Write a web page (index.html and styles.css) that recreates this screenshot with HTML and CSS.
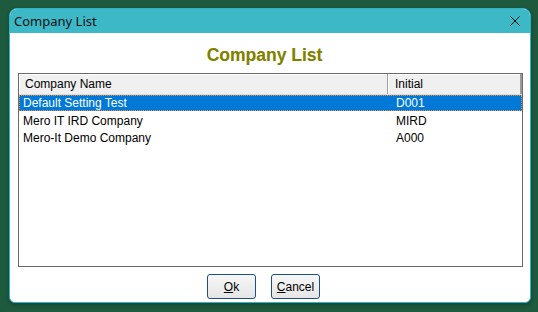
FILE: index.html
```html
<!DOCTYPE html>
<html>
<head>
<meta charset="utf-8">
<link rel="stylesheet" href="styles.css">
</head>
<body>
<div class="window">
  <div class="titlebar">
    <span class="title">Company List</span>
    <svg class="close" width="10" height="10" viewBox="0 0 10 10"><path d="M0.5 0.5 L9.5 9.5 M9.5 0.5 L0.5 9.5" stroke="#111" stroke-width="1" fill="none"/></svg>
  </div>
  <div class="content">
    <div class="heading">Company List</div>
    <div class="list">
      <div class="header">
        <div class="hcell c1">Company Name</div>
        <div class="hcell c2">Initial</div>
      </div>
      <div class="row selected"><div class="cell c1">Default Setting Test</div><div class="cell c2">D001</div></div>
      <div class="row"><div class="cell c1">Mero IT IRD Company</div><div class="cell c2">MIRD</div></div>
      <div class="row"><div class="cell c1">Mero-It Demo Company</div><div class="cell c2">A000</div></div>
    </div>
    <div class="buttons">
      <button class="btn"><u>O</u>k</button>
      <button class="btn"><u>C</u>ancel</button>
    </div>
  </div>
</div>
</body>
</html>
```
FILE: styles.css
```css
html, body {
  margin: 0;
  padding: 0;
}
body {
  width: 538px;
  height: 312px;
  background: #1e5a3d;
  overflow: hidden;
  font-family: "Liberation Sans", Arial, sans-serif;
}
.window {
  margin: 8px 0 0 9px;
  width: 522px;
  height: 295px;
  box-sizing: border-box;
  border: 1px solid #2cb4c8;
  border-radius: 8px 8px 6px 6px;
  background: #fff;
  display: flex;
  flex-direction: column;
  overflow: hidden;
  box-shadow: 0 2px 4px rgba(0,0,0,0.25);
}
.titlebar {
  height: 24px;
  background: #3cb8c6;
  display: flex;
  align-items: center;
  justify-content: space-between;
  padding: 0 10px 0 4px;
  flex: none;
}
.title {
  font-family: "Noto Sans", "Open Sans", sans-serif;
  font-size: 13px;
  color: #111;
  line-height: 24px;
}
.close {
  display: block;
}
.content {
  flex: 1;
  display: flex;
  flex-direction: column;
  padding: 0 7px 0 8px;
}
.heading {
  margin-top: 12px;
  height: 20px;
  line-height: 20px;
  text-align: center;
  padding-right: 12px;
  font-weight: bold;
  font-size: 17.5px;
  color: #808000;
  text-shadow: 0.4px 0.3px 0 rgba(200,190,0,0.35);
}
.list {
  margin-top: 8px;
  height: 194px;
  box-sizing: border-box;
  border: 1px solid #6a6a6a;
  font-size: 12px;
  color: #000;
}
.header {
  display: flex;
  height: 21px;
  box-sizing: border-box;
  background: #f0f0f0;
  border-bottom: 1px solid #dcdcdc;
}
.hcell {
  box-sizing: border-box;
  line-height: 21px;
  padding-left: 6px;
  border-right: 1px solid #a0a0a0;
  box-shadow: inset 1px 1px 0 #fff;
}
.hcell.c1 {
  width: 369px;
}
.hcell.c2 {
  flex: 1;
  padding-left: 7px;
  border-right: 2px solid #9a9a9a;
}
.row {
  display: flex;
  height: 17.5px;
  line-height: 16px;
}
.row .cell.c1 {
  width: 369px;
  padding-left: 4px;
  box-sizing: border-box;
}
.row .cell.c2 {
  flex: 1;
  padding-left: 8px;
}
.row.selected {
  height: 16px;
  margin-bottom: 1.5px;
  background: #0078d7;
  color: #fff;
  outline: 1px dotted #f0913a;
  outline-offset: -1px;
}
.buttons {
  margin-top: 7px;
  display: flex;
  justify-content: center;
  gap: 15px;
  padding-right: 14px;
}
.btn {
  width: 49px;
  height: 25px;
  box-sizing: border-box;
  border: 1px solid #1d4f80;
  border-radius: 3px;
  background: linear-gradient(#f7f7f7, #e5e5e5);
  font-family: "Liberation Sans", Arial, sans-serif;
  font-size: 12px;
  color: #000;
  padding: 0;
  margin: 0;
}
```
